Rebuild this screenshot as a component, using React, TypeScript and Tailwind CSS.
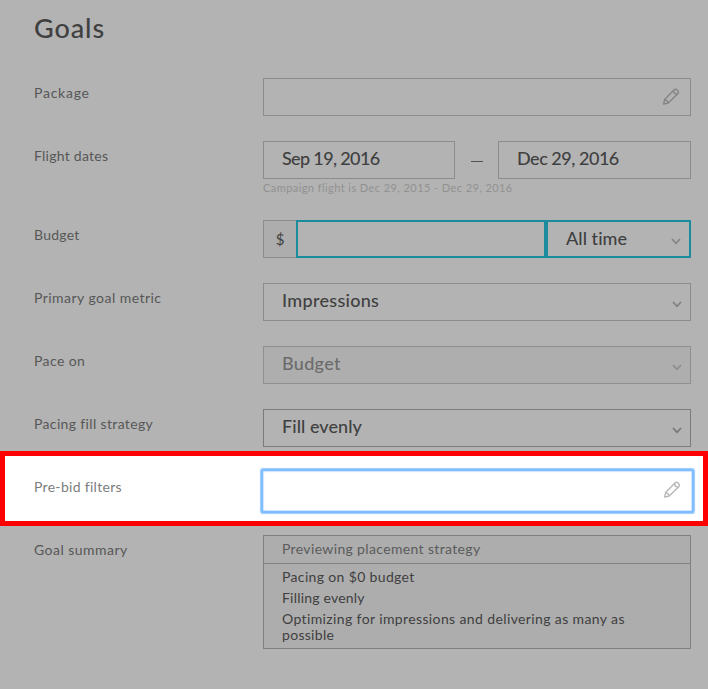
import type { ReactNode } from 'react';

function Pencil({ className }: { className: string }) {
  return (
    <svg className={className} width="18" height="18" viewBox="0 0 18 18" fill="none" stroke="currentColor" strokeWidth="1.4" strokeLinejoin="round">
      <path d="M1.7 16 2.6 11.6 11.7 2.3a2.6 2.6 0 0 1 3.8 3.6L6.2 15.1Z" />
      <path d="M11.4 2.8c.4 1.9 1.5 3.1 3.6 3.6M2.6 11.6c1.9.3 3.2 1.5 3.6 3.5" />
    </svg>
  );
}

function Chevron({ className }: { className: string }) {
  return (
    <svg className={className} width="10" height="7" viewBox="0 0 10 7" fill="none" stroke="currentColor" strokeWidth="1.7">
      <path d="M1 1 5 5.3 9 1" />
    </svg>
  );
}

function Row({ label, tracking, className, children }: { label: string; tracking: string; className: string; children: ReactNode }) {
  return (
    <div className={`flex items-start pl-[34px] ${className}`}>
      <div className="w-[229px] shrink-0 pt-[5px] text-sm leading-5 text-[#575757]">
        <span className={tracking}>{label}</span>
      </div>
      <div className="w-[428px] shrink-0">{children}</div>
    </div>
  );
}

function Select({ value, tracking, className, arrow }: { value: string; tracking: string; className: string; arrow: string }) {
  return (
    <div className={`flex h-[38px] items-center justify-between border pr-[8px] pl-[18px] text-lg leading-none font-medium ${className}`}>
      <span className={`-mt-[4px] ${tracking}`}>{value}</span>
      <Chevron className={`mt-1 ${arrow}`} />
    </div>
  );
}

export default function App() {
  return (
    <main className="h-[689px] w-[708px] overflow-hidden bg-[#b3b3b3] font-['Lato','Liberation_Sans',sans-serif] whitespace-nowrap text-[#404040]">
      <h1 className="h-[78px] pt-[10px] pl-[34px] text-[27px] leading-9 font-medium">
        <span className="tracking-[0.9px]">Goals</span>
      </h1>

      <Row label="Package" tracking="tracking-[0.75px]" className="h-[63px]">
        <div className="flex h-[38px] items-center justify-end border border-[#8c8c8c] pr-[10px]">
          <Pencil className="text-[#858585]" />
        </div>
      </Row>

      <Row label="Flight dates" tracking="tracking-[0.25px]" className="h-[79px]">
        <div className="flex items-center justify-between text-lg leading-none font-medium">
          <div className="flex h-[38px] w-[192px] items-center border border-[#8c8c8c] pl-[18px]">
            <span className="-mt-[4px] tracking-[-0.65px]">Sep 19, 2016</span>
          </div>
          <div className="mt-[3px] h-[1.5px] w-3 bg-[#505050]" />
          <div className="flex h-[38px] w-[193px] items-center border border-[#8c8c8c] pl-[18px]">
            <span className="-mt-[4px] tracking-[-0.48px]">Dec 29, 2016</span>
          </div>
        </div>
        <p className="mt-[2px] text-[11px] leading-[14px] text-[#919191]">
          <span className="tracking-[0.43px]">Campaign flight is Dec 29, 2015 - Dec 29, 2016</span>
        </p>
      </Row>

      <Row label="Budget" tracking="tracking-[0.25px]" className="h-[63px]">
        <div className="flex">
          <div className="flex h-[38px] w-[33px] items-center justify-center border border-r-0 border-[#8c8c8c] bg-[#adadad] text-[15px] leading-none">$</div>
          <div className="h-[38px] w-[250px] border-2 border-[#1a8c9e]" />
          <div className="flex h-[38px] w-[145px] items-center justify-between border-2 border-[#1a8c9e] pr-[8px] pl-[18px] text-lg leading-none font-medium">
            <span className="-mt-[2px] tracking-[0.05px]">All time</span>
            <Chevron className="mt-[5px] text-[#858585]" />
          </div>
        </div>
      </Row>

      <Row label="Primary goal metric" tracking="tracking-[0.46px]" className="h-[63px]">
        <Select value="Impressions" tracking="tracking-[0.3px]" className="border-[#8c8c8c]" arrow="text-[#808080]" />
      </Row>

      <Row label="Pace on" tracking="tracking-[0.4px]" className="h-[63px]">
        <Select value="Budget" tracking="tracking-[0.3px]" className="border-[#8f8f8f] bg-[#aeaeae] text-[#6b6b6b]" arrow="text-[#8c8c8c]" />
      </Row>

      <Row label="Pacing fill strategy" tracking="tracking-[0.35px]" className="h-[42px]">
        <Select value="Fill evenly" tracking="tracking-[0.05px]" className="border-[#7b7b7b]" arrow="text-[#757575]" />
      </Row>

      <section className="h-[75px] border-[5px] border-[#ff0000] bg-white">
        <div className="flex items-start pl-[29px]">
          <div className="w-[229px] shrink-0 pt-[21px] text-sm leading-5 text-[#7d7d7d]">
            <span className="tracking-[0.3px]">Pre-bid filters</span>
          </div>
          <div className="mt-[15px] flex h-[40px] w-[429px] shrink-0 items-center justify-end rounded-[1px] pr-[11px] pb-[3px] shadow-[0_0_0_2px_#80bdff,0_0_1px_3px_#80bdffcc,inset_0_0_1px_1px_#80bdff66]">
            <Pencil className="text-[#b8b8b8]" />
          </div>
        </div>
      </section>

      <Row label="Goal summary" tracking="tracking-[0.46px]" className="pt-[9px]">
        <div className="h-[114px] border border-[#808080] bg-[#adadad] text-sm">
          <div className="h-7 border-b border-[#808080] pl-[18px] leading-[25px] text-[#5b5b5b]">
            <span className="tracking-[0.35px]">Previewing placement strategy</span>
          </div>
          <ul className="pt-[5px] pl-[18px] leading-4">
            <li className="mb-[5px]"><span className="tracking-[0.35px]">Pacing on $0 budget</span></li>
            <li className="mb-[5px]"><span className="tracking-[0.2px]">Filling evenly</span></li>
            <li>
              <span className="tracking-[0.38px]">Optimizing for impressions and delivering as many as</span>
              <br />
              <span className="tracking-[0.3px]">possible</span>
            </li>
          </ul>
        </div>
      </Row>
    </main>
  );
}
